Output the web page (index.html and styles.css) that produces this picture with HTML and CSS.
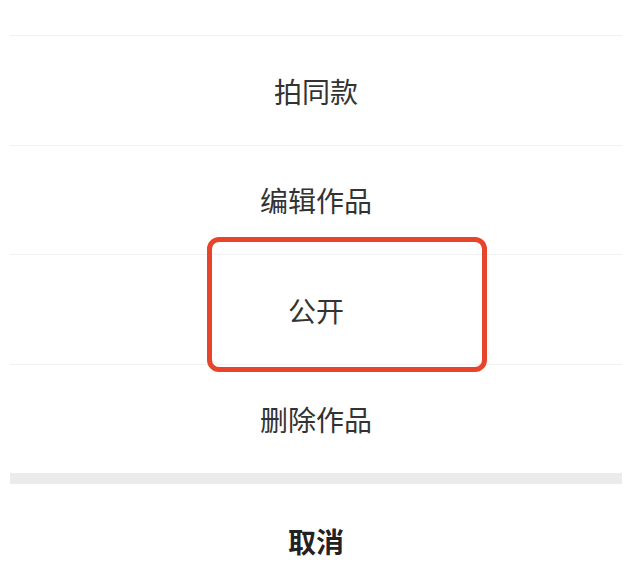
FILE: index.html
```html
<!DOCTYPE html>
<html lang="zh-CN">
<head>
<meta charset="utf-8">
<link rel="stylesheet" href="styles.css">
</head>
<body>
<div class="sheet">
  <div class="top-space"></div>
  <div class="item">拍同款</div>
  <div class="item">编辑作品</div>
  <div class="item">公开</div>
  <div class="item">删除作品</div>
  <div class="gap"></div>
  <div class="item cancel">取消</div>
  <div class="highlight"></div>
</div>
</body>
</html>
```

FILE: styles.css
```css
html, body {
  margin: 0;
  padding: 0;
  background: #ffffff;
}
body {
  width: 628px;
  height: 580px;
  overflow: hidden;
  font-family: "Noto Sans CJK SC", "Noto Sans", sans-serif;
}
.sheet {
  position: relative;
  padding: 0 6px 0 10px;
  display: flex;
  flex-direction: column;
}
.top-space {
  height: 35px;
}
.item {
  box-sizing: border-box;
  height: 109.5px;
  border-top: 1px solid #f1f1f1;
  display: flex;
  align-items: center;
  justify-content: center;
  font-size: 28px;
  color: #333333;
  padding-top: 1px;
  letter-spacing: 0;
}
.gap {
  height: 11px;
  background: #ebebeb;
}
.cancel {
  border-top: none;
  height: 114px;
  font-weight: 700;
  color: #222222;
  padding-top: 0;
}
.highlight {
  position: absolute;
  left: 207px;
  top: 237px;
  width: 280px;
  height: 135px;
  box-sizing: border-box;
  border: 5px solid #e8432b;
  border-radius: 12px;
}
```
